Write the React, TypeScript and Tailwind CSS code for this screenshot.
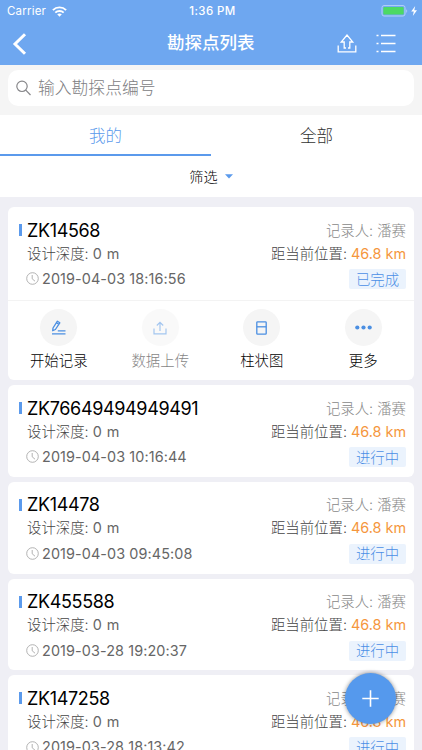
import React from 'react';

interface Point {
  code: string;
  time: string;
  status: string;
  expanded?: boolean;
}

const points: Point[] = [
  { code: 'ZK14568', time: '2019-04-03 18:16:56', status: '已完成', expanded: true },
  { code: 'ZK76649494949491', time: '2019-04-03 10:16:44', status: '进行中' },
  { code: 'ZK14478', time: '2019-04-03 09:45:08', status: '进行中' },
  { code: 'ZK455588', time: '2019-03-28 19:20:37', status: '进行中' },
  { code: 'ZK147258', time: '2019-03-28 18:13:42', status: '进行中' },
];

function StatusBar() {
  return (
    <div className="flex h-[22px] items-center text-[11.5px] text-white">
      <div className="flex flex-1 items-center pt-px pl-[7px]">
        <span className="tracking-[0.2px]">Carrier</span>
        <svg className="ml-[6px]" width="15" height="11" viewBox="0 0 15 11" fill="none" stroke="white" strokeWidth="1.9">
          <path d="M0.9 4.1C4.5 0.5 10.5 0.5 14.1 4.1" />
          <path d="M3.3 6.6C5.6 4.4 9.4 4.4 11.7 6.6" />
          <path d="M5.2 8.2C6.5 7.1 8.5 7.1 9.8 8.2L7.5 10.7Z" fill="white" stroke="none" />
        </svg>
      </div>
      <span className="pt-px font-medium tracking-[0.4px]">1:36 PM</span>
      <div className="flex flex-1 items-center justify-end pr-[4px]">
        <svg width="37" height="12" viewBox="0 0 37 12">
          <rect x="1" y="0.6" width="23" height="10.4" rx="2" fill="none" stroke="#b5d2f8" />
          <rect x="2.3" y="2" width="20.4" height="7.6" rx="1" fill="#4cd964" />
          <path d="M25.3 4.2C26.5 4.7 26.5 7.3 25.3 7.8Z" fill="#b5d2f8" />
          <path d="M34.2 1L30.2 6.6H32.8L31.8 11L36 5.2H33.3Z" fill="white" />
        </svg>
      </div>
    </div>
  );
}

function Header() {
  return (
    <header className="h-[65px] shrink-0 bg-[#6ea7f0]">
      <StatusBar />
      <div className="flex h-[43px] items-center text-white">
        <div className="w-[167px] pl-[12px]">
          <svg width="15" height="22" viewBox="0 0 15 22" fill="none" stroke="white" strokeWidth="3">
            <path d="M13 1.2L3 11L13 20.8" />
          </svg>
        </div>
        <h1 className="text-[17.5px] font-medium">勘探点列表</h1>
        <div className="flex flex-1 items-center justify-end gap-[19px] pr-[26px]">
          <svg width="20" height="20" viewBox="0 0 20 20" fill="none" stroke="white" strokeWidth="1.3">
            <path d="M1.2 11.5V17.9H18.8V11.5" />
            <path d="M9 14H7.2V8H4.2L10 1L15.8 8H12.8V14H11" />
          </svg>
          <svg width="20" height="20" viewBox="0 0 20 20" stroke="white" strokeWidth="1.3">
            <path d="M0.5 1.5H2.5M5 1.5H19.5M0.5 9.5H2.5M5 9.5H19.5M0.5 17.5H2.5M5 17.5H19.5" />
          </svg>
        </div>
      </div>
    </header>
  );
}

function SearchBar() {
  return (
    <div className="h-[50px] shrink-0 bg-[#f5f5f5] px-2 pt-[5px]">
      <div className="flex h-[36px] items-center rounded-[10px] bg-white pl-[8px] text-[16.8px] font-light text-[#808083]">
        <svg className="mr-[7px]" width="15" height="16" viewBox="0 0 15 16" fill="none" stroke="#87878a" strokeWidth="1.2">
          <circle cx="6" cy="6.3" r="5.2" />
          <path d="M9.8 10.2L14.5 15" />
        </svg>
        <span className="pt-[2px]">输入勘探点编号</span>
      </div>
    </div>
  );
}

function Tabs() {
  return (
    <div className="flex h-[41px] shrink-0 bg-white text-[16.5px] font-light">
      <div className="flex flex-1 items-center justify-center border-b-2 border-[#5b9aec] pt-[4px] text-[#5b9aec]">我的</div>
      <div className="flex flex-1 items-center justify-center border-b-2 border-white pt-[4px] text-[#333]">全部</div>
    </div>
  );
}

function ActionIcon({ name }: { name: string }) {
  if (name === '开始记录') {
    return (
      <svg width="15" height="15" viewBox="0 0 15 15" fill="none" stroke="#4b8fe2" strokeWidth="1.3">
        <path d="M2 8L6.4 1.2L8.8 2.8L4.4 9.5L1.7 10.7ZM5.5 2.7L7.8 4.3" strokeLinejoin="round" />
        <path d="M6.8 10.9H14.5M1 13.9H14.5" strokeWidth="1.4" />
      </svg>
    );
  }
  if (name === '数据上传') {
    return (
      <svg width="14" height="14" viewBox="0 0 14 14" fill="none" stroke="#4b8fe2" strokeWidth="1.2">
        <path d="M1 7.5V12.8H13V7.5M7 10V1.3M3.8 4.5L7 1.3L10.2 4.5" />
      </svg>
    );
  }
  if (name === '柱状图') {
    return (
      <svg width="11" height="14" viewBox="0 0 11 14" fill="none" stroke="#4b8fe2" strokeWidth="1.3">
        <rect x="0.8" y="0.8" width="9.4" height="12.4" rx="0.8" />
        <path d="M0.8 5.8H10.2" />
      </svg>
    );
  }
  return (
    <svg width="17" height="5" viewBox="0 0 17 5" fill="#4b8fe2">
      <circle cx="2.3" cy="2.5" r="2.1" />
      <circle cx="8.5" cy="2.5" r="2.1" />
      <circle cx="14.7" cy="2.5" r="2.1" />
    </svg>
  );
}

function Actions() {
  const items = ['开始记录', '数据上传', '柱状图', '更多'];
  return (
    <div className="grid h-[80px] grid-cols-4 border-t border-[#f3f3f3] pt-[8px]">
      {items.map((item) => (
        <div key={item} className={item === '数据上传' ? 'flex flex-col items-center opacity-50' : 'flex flex-col items-center'}>
          <div className="flex size-[37px] items-center justify-center rounded-full bg-[#f5f5f5]">
            <ActionIcon name={item} />
          </div>
          <span className="mt-[4px] text-[14.4px] leading-[22px] font-light text-black">{item}</span>
        </div>
      ))}
    </div>
  );
}

function PointCard({ point }: { point: Point }) {
  return (
    <div className="shrink-0 rounded-[6px] bg-white">
      <div className={point.expanded ? 'h-[93px] px-2 pt-[12px]' : 'h-[91.75px] px-2 pt-[12px]'}>
        <div className="flex h-[22px] items-center justify-between pl-[3px]">
          <div className="flex items-center">
            <div className="h-[12px] w-[3px] bg-[#5b9aec]" />
            <span className="ml-[5px] text-[18px] tracking-[-0.35px] text-black">{point.code}</span>
          </div>
          <span className="pt-px text-[14.4px] font-light text-[#888]">记录人: 潘赛</span>
        </div>
        <div className="flex h-[24px] items-center justify-between pt-px pl-[11px] text-[14.4px] font-light text-[#444]">
          <span>设计深度: <span className="font-normal tracking-[0.5px] text-[#666]">0 m</span></span>
          <span>距当前位置: <span className="font-normal text-[#f5963c]">46.8 km</span></span>
        </div>
        <div className="flex h-[28px] items-center justify-between pl-[10px]">
          <div className="flex items-center">
            <svg width="13" height="13" viewBox="0 0 13 13" fill="none" stroke="#aaa" strokeWidth="0.9">
              <circle cx="6.5" cy="6.5" r="5.8" />
              <path d="M6.2 3V6.8L9 9.2" />
            </svg>
            <span className="ml-[3px] text-[14.4px] tracking-[0.1px] text-[#666]">{point.time}</span>
          </div>
          <div className="flex h-[20px] w-[57px] items-center justify-center rounded-[2px] bg-[#ebf3fd] pt-px text-[14.4px] font-light text-[#4b8fe6]">{point.status}</div>
        </div>
      </div>
      {point.expanded && <Actions />}
    </div>
  );
}

export default function App() {
  return (
    <div className="relative flex h-[750px] w-[422px] flex-col overflow-hidden bg-[#efeff5] font-[Inter,'Noto_Sans_CJK_SC',sans-serif]">
      <Header />
      <SearchBar />
      <Tabs />
      <div className="flex h-[41px] shrink-0 items-center justify-center gap-[7px] bg-white text-[14.2px] text-black">
        <span className="font-light">筛选</span>
        <svg width="8" height="5" viewBox="0 0 8 5" fill="#5b9aec">
          <path d="M0 0.3H8L4 4.5Z" />
        </svg>
      </div>
      <main className="flex flex-1 flex-col gap-[5px] overflow-hidden px-2 pt-[10px]">
        {points.map((point) => (
          <PointCard key={point.code} point={point} />
        ))}
      </main>
      <button className="absolute top-[673px] left-[345px] flex size-[51px] items-center justify-center rounded-full bg-[#5599ed] shadow-[0_0_4px_rgba(0,0,0,0.45)]">
        <svg width="17" height="17" viewBox="0 0 17 17" stroke="white" strokeWidth="1.6">
          <path d="M8.5 0.3V16.7M0.3 8.5H16.7" />
        </svg>
      </button>
    </div>
  );
}
